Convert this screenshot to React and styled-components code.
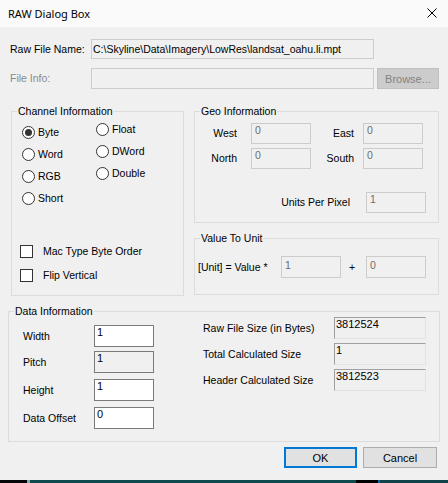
import React from 'react'
import styled, { createGlobalStyle } from 'styled-components'

const Global = createGlobalStyle`
  html, body { margin: 0; padding: 0; background: #f0f0f0; }
  * { box-sizing: border-box; }
`

const Window = styled.div`
  width: 448px;
  height: 483px;
  display: flex;
  flex-direction: column;
  background: #f0f0f0;
  font-family: "Liberation Sans", Arial, sans-serif;
  font-size: 10.5px;
  color: #000;
  overflow: hidden;
`

const TitleBar = styled.div`
  height: 27px;
  flex: none;
  display: flex;
  align-items: center;
  justify-content: space-between;
  padding: 0 11px 1px 8px;
  background: #fafafa;
  font-family: "Noto Sans", "Open Sans", sans-serif;
  font-size: 11px;
`

const FileGrid = styled.div`
  display: grid;
  grid-template-columns: 78px 283px 62px;
  grid-template-rows: 20px 21px;
  column-gap: 3px;
  row-gap: 9px;
  margin: 12px 0 0 10px;
  align-items: center;
`

const Label = styled.span`
  line-height: 13px;
  white-space: nowrap;
  color: ${p => (p.$disabled ? '#8a8a8a' : '#000')};
  text-align: ${p => p.$align || 'left'};
  padding-right: ${p => p.$pr || 0}px;
`

const Edit = styled.div`
  width: ${p => p.$w || 60}px;
  height: ${p => p.$h || 21}px;
  border: 1px solid ${p => (p.$enabled ? '#7a7a7a' : '#cccccc')};
  background: ${p => (p.$white ? '#fff' : '#f0f0f0')};
  color: ${p => (p.$gray ? '#6d6d6d' : '#000')};
  padding: ${p => p.$pt ?? 0}px 0 0 ${p => p.$pl ?? 2}px;
  line-height: 13px;
  font-size: ${p => p.$fs || 10.5}px;
  white-space: nowrap;
  overflow: hidden;
  display: flex;
  align-items: ${p => (p.$center ? 'center' : 'flex-start')};
`

const SunkenBox = styled.div`
  width: 92px;
  height: 22px;
  border-top: 1px solid #a0a0a0;
  border-left: 1px solid #a0a0a0;
  border-right: 1px solid #e3e3e3;
  border-bottom: 1px solid #e3e3e3;
  padding: 0 0 0 1px;
  line-height: 13px;
  font-size: 11px;
`

const Button = styled.div`
  width: ${p => p.$w}px;
  height: 21px;
  display: flex;
  align-items: center;
  justify-content: center;
  background: ${p => (p.$disabled ? '#cccccc' : '#e1e1e1')};
  color: ${p => (p.$disabled ? '#838383' : '#000')};
  border: ${p => (p.$default ? '2px solid #0078d7' : p.$disabled ? '1px solid #bfbfbf' : '1px solid #adadad')};
  font-size: 11px;
`

const Middle = styled.div`
  display: flex;
  gap: 10px;
  margin: 22px 0 0 11px;
`

const Group = styled.div`
  position: relative;
  width: ${p => p.$w}px;
  height: ${p => p.$h}px;
  border: 1px solid #dcdcdc;
  flex: none;
`

const Legend = styled.span`
  position: absolute;
  top: -7px;
  left: 5px;
  padding: 0 1px;
  line-height: 13px;
  background: #f0f0f0;
  white-space: nowrap;
`

const RightColumn = styled.div`
  display: flex;
  flex-direction: column;
  gap: 15px;
`

const RadioColumns = styled.div`
  display: flex;
  padding: 9px 0 0 10px;
`

const RadioColumn = styled.div`
  width: ${p => p.$w || 'auto'};
  margin-top: ${p => p.$mt || 0}px;
  display: flex;
  flex-direction: column;
`

const Option = styled.div`
  height: ${p => p.$h || 22}px;
  display: flex;
  align-items: center;
  gap: ${p => p.$gap || 3}px;
  line-height: 13px;
`

const RadioDot = styled.span`
  width: 13px;
  height: 13px;
  border-radius: 50%;
  border: 1px solid #333;
  background: #fff;
  display: flex;
  align-items: center;
  justify-content: center;
  flex: none;
  &::after {
    content: '';
    width: 7px;
    height: 7px;
    border-radius: 50%;
    background: ${p => (p.$checked ? '#333' : 'transparent')};
  }
`

const CheckBox = styled.span`
  width: 13px;
  height: 13px;
  border: 1px solid #333;
  background: #fff;
  flex: none;
`

const CheckList = styled.div`
  display: flex;
  flex-direction: column;
  margin-top: 30px;
  padding-left: 8px;
`

const GeoGrid = styled.div`
  display: grid;
  grid-template-columns: 49px 60px 52px 60px;
  grid-template-rows: 21px 21px;
  row-gap: 4px;
  padding: 11px 0 0 7px;
  align-items: center;
`

const UnitsRow = styled.div`
  display: flex;
  justify-content: flex-end;
  align-items: center;
  gap: 16px;
  margin-top: 23px;
  padding-right: 12px;
`

const ValueRow = styled.div`
  display: flex;
  align-items: center;
  padding: 17px 0 0 3px;
`

const Plus = styled.span`
  width: 25px;
  text-align: center;
  padding-right: 3px;
`

const DataGroupWrap = styled.div`
  margin: 15px 0 0 8px;
`

const DataBody = styled.div`
  display: flex;
  padding: 5px 0 0 14px;
`

const DataColumn = styled.div`
  display: flex;
  flex-direction: column;
  padding-top: ${p => p.$pt || 0}px;
  margin-left: ${p => p.$ml || 0}px;
`

const DataRow = styled.div`
  display: grid;
  grid-template-columns: ${p => p.$label}px auto;
  align-items: center;
  margin-top: ${p => p.$mt || 0}px;
`

const ButtonRow = styled.div`
  display: flex;
  justify-content: flex-end;
  gap: 6px;
  margin-top: 5px;
  padding-right: 11px;
`

const Desktop = styled.div`
  margin-top: auto;
  height: 3px;
  flex: none;
  background: linear-gradient(90deg, #050608 0 27px, #8aa 27px 30px, #0f4a4f 30px 356px, #000 356px 378px, #1266a8 378px 380px, #10424a 380px);
`

const CloseIcon = () => (
  <svg width="10" height="10" viewBox="0 0 10 10">
    <path d="M0.5 0.5 L9.5 9.5 M9.5 0.5 L0.5 9.5" stroke="#000" strokeWidth="1" />
  </svg>
)

const Radio = ({ label, checked }) => (
  <Option>
    <RadioDot $checked={checked} />
    <span>{label}</span>
  </Option>
)

const Check = ({ label }) => (
  <Option $h={24} $gap={10}>
    <CheckBox />
    <span>{label}</span>
  </Option>
)

export default function App() {
  return (
    <>
      <Global />
      <Window>
        <TitleBar>
          <span>RAW Dialog Box</span>
          <CloseIcon />
        </TitleBar>

        <FileGrid>
          <Label>Raw File Name:</Label>
          <Edit $w={283} $h={20} $center $pl={1}>C:\Skyline\Data\Imagery\LowRes\landsat_oahu.li.mpt</Edit>
          <span />
          <Label $disabled>File Info:</Label>
          <Edit $w={283} $h={21} />
          <Button $w={62} $disabled>Browse...</Button>
        </FileGrid>

        <Middle>
          <Group $w={173} $h={185}>
            <Legend>Channel Information</Legend>
            <RadioColumns>
              <RadioColumn $w="74px">
                <Radio label="Byte" checked />
                <Radio label="Word" />
                <Radio label="RGB" />
                <Radio label="Short" />
              </RadioColumn>
              <RadioColumn $mt={-3}>
                <Radio label="Float" />
                <Radio label="DWord" />
                <Radio label="Double" />
              </RadioColumn>
            </RadioColumns>
            <CheckList>
              <Check label="Mac Type Byte Order" />
              <Check label="Flip Vertical" />
            </CheckList>
          </Group>

          <RightColumn>
            <Group $w={245} $h={112}>
              <Legend>Geo Information</Legend>
              <GeoGrid>
                <Label $align="right" $pr={14}>West</Label>
                <Edit $gray $pl={3}>0</Edit>
                <Label $align="right" $pr={9}>East</Label>
                <Edit $gray $pl={3}>0</Edit>
                <Label $align="right" $pr={14}>North</Label>
                <Edit $gray $pl={3}>0</Edit>
                <Label $align="right" $pr={9}>South</Label>
                <Edit $gray $pl={3}>0</Edit>
              </GeoGrid>
              <UnitsRow>
                <Label>Units Per Pixel</Label>
                <Edit $gray $pl={3}>1</Edit>
              </UnitsRow>
            </Group>

            <Group $w={245} $h={57}>
              <Legend>Value To Unit</Legend>
              <ValueRow>
                <Label style={{ width: 83 }}>[Unit] = Value *</Label>
                <Edit $gray $h={22} $pt={2} $pl={3}>1</Edit>
                <Plus>+</Plus>
                <Edit $gray $h={22} $pt={2} $pl={3}>0</Edit>
              </ValueRow>
            </Group>
          </RightColumn>
        </Middle>

        <DataGroupWrap>
          <Group $w={432} $h={131}>
            <Legend>Data Information</Legend>
            <DataBody>
              <DataColumn $pt={8}>
                <DataRow $label={71}>
                  <Label>Width</Label>
                  <Edit $enabled $white $h={22} $pl={2} $fs={11}>1</Edit>
                </DataRow>
                <DataRow $label={71} $mt={4}>
                  <Label>Pitch</Label>
                  <Edit $enabled $h={22} $pl={2} $fs={11}>1</Edit>
                </DataRow>
                <DataRow $label={71} $mt={6}>
                  <Label>Height</Label>
                  <Edit $enabled $white $h={22} $pl={2} $fs={11}>1</Edit>
                </DataRow>
                <DataRow $label={71} $mt={6}>
                  <Label>Data Offset</Label>
                  <Edit $enabled $white $h={22} $pl={2} $fs={11}>0</Edit>
                </DataRow>
              </DataColumn>
              <DataColumn $ml={49}>
                <DataRow $label={131}>
                  <Label>Raw File Size (in Bytes)</Label>
                  <SunkenBox>3812524</SunkenBox>
                </DataRow>
                <DataRow $label={131} $mt={4}>
                  <Label>Total Calculated Size</Label>
                  <SunkenBox>1</SunkenBox>
                </DataRow>
                <DataRow $label={131} $mt={4}>
                  <Label>Header Calculated Size</Label>
                  <SunkenBox>3812523</SunkenBox>
                </DataRow>
              </DataColumn>
            </DataBody>
          </Group>
        </DataGroupWrap>

        <ButtonRow>
          <Button $w={73} $default>OK</Button>
          <Button $w={74}>Cancel</Button>
        </ButtonRow>

        <Desktop />
      </Window>
    </>
  )
}
